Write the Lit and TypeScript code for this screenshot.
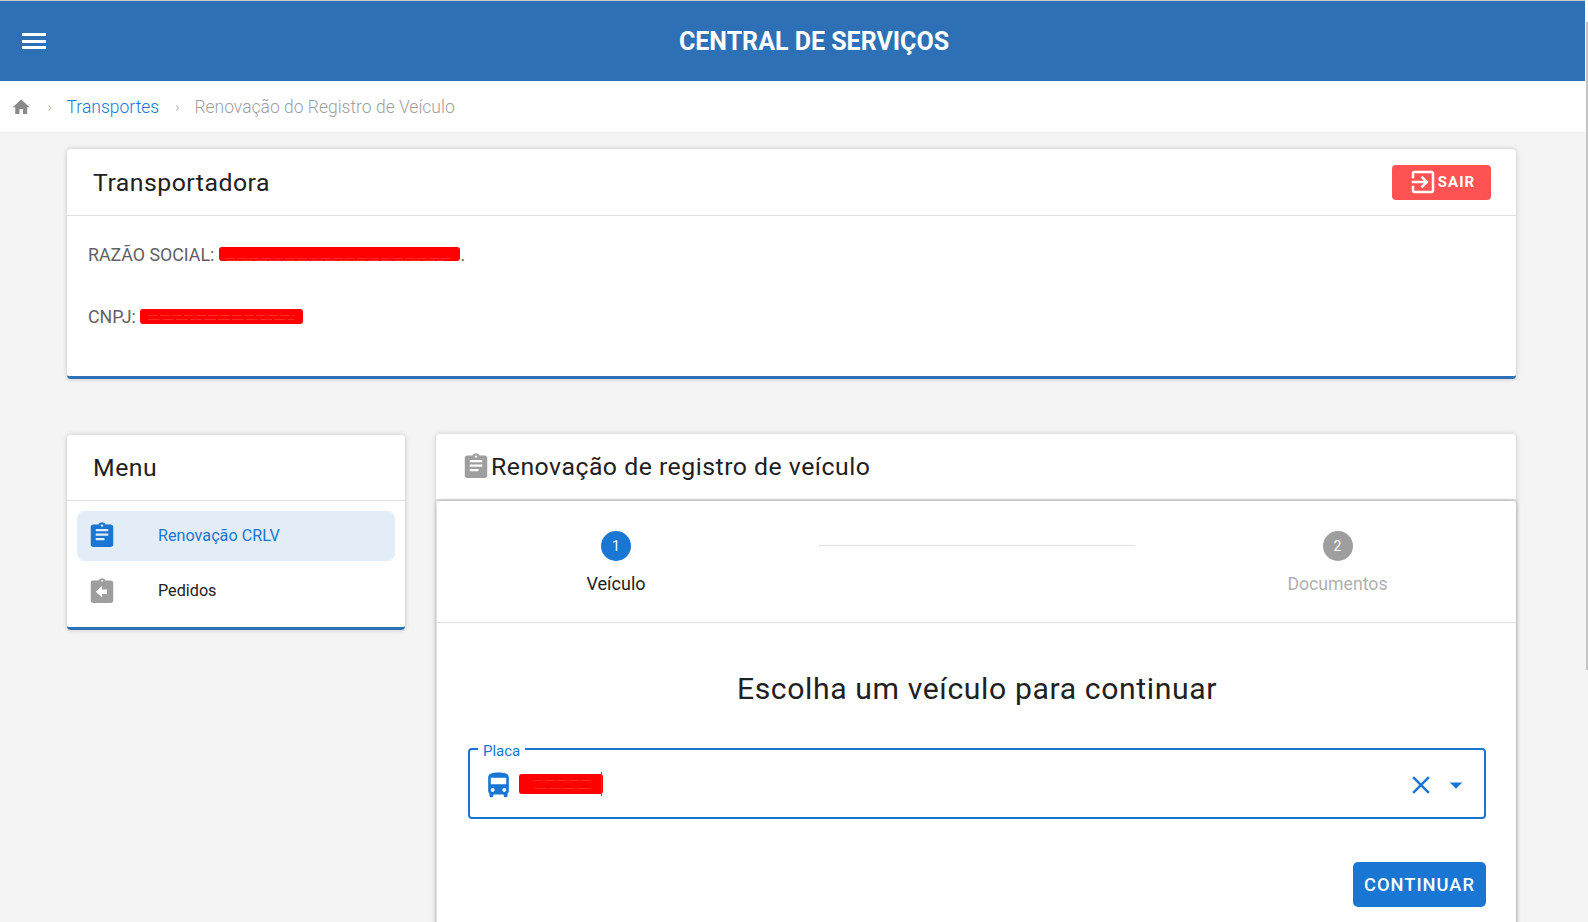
import { LitElement, html, css, svg } from "lit";
import { customElement } from "lit/decorators.js";

const clip = svg`<path d="M19 3h-4.18C14.4 1.84 13.3 1 12 1s-2.4.84-2.82 2H5c-1.1 0-2 .9-2 2v16c0 1.1.9 2 2 2h14c1.1 0 2-.9 2-2V5c0-1.1-.9-2-2-2zm-7 0c.55 0 1 .45 1 1s-.45 1-1 1-1-.45-1-1 .45-1 1-1zm2 14H7v-2h7v2zm3-4H7v-2h10v2zm0-4H7V7h10v2z"/>`;
const clipBack = svg`<path d="M19 3h-4.18C14.4 1.84 13.3 1 12 1s-2.4.84-2.82 2H5c-.14 0-.27.01-.4.04-.39.08-.74.28-1.01.55-.18.18-.33.4-.43.64-.1.23-.16.49-.16.77v16c0 .27.06.54.16.78.1.24.25.45.43.64.27.27.62.47 1.01.55.13.02.26.03.4.03h14c1.1 0 2-.9 2-2V5c0-1.1-.9-2-2-2zm-7-.25c.41 0 .75.34.75.75s-.34.75-.75.75-.75-.34-.75-.75.34-.75.75-.75zM16 15h-4v3l-5-5 5-5v3h4v4z"/>`;

@customElement("app-root")
export class AppRoot extends LitElement {
  static styles = css`
    :host { display: block; width: 1588px; height: 922px; overflow: hidden; background: #f4f4f4; font-family: Roboto, "Liberation Sans", sans-serif; color: #212121; position: relative; }
    * { box-sizing: border-box; }
    svg { display: block; fill: currentColor; flex: none; }
    .page { width: 1585px; display: flex; flex-direction: column; border-top: 1px solid #c8c8c8; }
    .scrollbar { position: absolute; right: 0; top: 0; width: 3px; height: 132px; background: #fff; }
    .thumb { position: absolute; right: 0; top: 22px; width: 2px; height: 648px; background: #c4c4c4; }
    .appbar { height: 80px; background: #2d70b6; color: #fff; display: flex; align-items: center; justify-content: center; position: relative; padding-left: 43px; }
    .appbar h1 { margin: 0; padding-top: 1px; font-size: 25px; font-weight: 700; line-height: 1; }
    .menu-btn { position: absolute; left: 22px; top: 32px; width: 24px; height: 16px; display: flex; flex-direction: column; justify-content: space-between; }
    .menu-btn i { display: block; height: 3px; background: #fff; }
    .crumbs { height: 52px; background: #fff; border-bottom: 1px solid #eeeeee; display: flex; align-items: center; padding: 1px 0 0 11px; font-size: 17.5px; font-weight: 300; color: #9e9e9e; }
    .crumbs .home { color: #8a8a8a; width: 20.4px; height: 20.4px; }
    .crumbs .sep { font-size: 14px; margin: 0 15px 0 16px; color: #9e9e9e; }
    .crumbs a { color: #1976d2; }
    .content { padding: 16px 69px 0 67px; display: flex; flex-direction: column; }
    .card { background: #fff; border-radius: 4px; box-shadow: 0 0 5px rgba(0,0,0,.2); }
    .blue-end { border-bottom: 3px solid #2d70b6; }
    .card-head { height: 66px; display: flex; align-items: center; justify-content: space-between; padding: 0 25px 0 26px; border-bottom: 1px solid #e0e0e0; }
    .card-head.top { height: 67px; }
    .card-head h2 { margin: 0; font-size: 24.8px; font-weight: 400; letter-spacing: .5px; }
    .sair { width: 99px; height: 35px; border-radius: 4px; background: #ff5252; color: #fff; font-size: 15px; font-weight: 700; letter-spacing: 1px; display: flex; align-items: center; justify-content: center; }
    .sair svg { width: 30px; height: 30px; }
    .info { height: 160px; padding: 27px 21px 0; font-size: 17.8px; color: #616161; display: flex; flex-direction: column; gap: 40px; }
    .info div { display: flex; align-items: center; height: 22px; gap: 4.6px; }
    .red { background-color: #ff0000; border-radius: 3px; display: block; background-repeat: no-repeat; background-image: repeating-linear-gradient(90deg, rgba(255,130,130,.3) 0 10px, transparent 10px 12px), repeating-linear-gradient(90deg, rgba(255,130,130,.3) 0 12px, transparent 12px 14px); }
    .dot { margin-left: -4px; }
    .r1 { width: 241px; height: 14px; background-size: 94% 1px, 90% 1px; background-position: 6px 11px, 8px 13px; }
    .r2 { width: 163px; height: 15px; background-size: 90% 1px, 90% 1px; background-position: 8px 6px, 8px 10px; }
    .cols { display: grid; grid-template-columns: 338px 1080px; gap: 31px; margin-top: 56px; align-items: start; }
    .menu-list { padding: 10px 10px 0; height: 126px; }
    .mi { height: 50px; border-radius: 8px; display: flex; align-items: center; padding-left: 10px; font-size: 16.2px; }
    .mi svg { width: 30px; height: 27px; margin-right: 41px; color: #9e9e9e; }
    .mi.on { background: #e3edf8; color: #1976d2; padding-bottom: 2px; }
    .mi.on svg { color: #1976d2; margin-top: -1px; }
    .mi + .mi { margin-top: 4px; }
    .main { margin-top: -1px; height: 600px; display: flex; flex-direction: column; }
    .main-head { height: 67px; flex: none; display: flex; align-items: center; padding-left: 25px; letter-spacing: .5px; border-bottom: 2px solid #e0e0e0; }
    .main-head svg { width: 30px; height: 27px; color: #9e9e9e; margin-top: -2px; }
    .main-head h2 { margin: 0; font-size: 24.8px; font-weight: 400; }
    .inner { flex: 1; margin-left: 1px; border-radius: 4px; background: #fff; box-shadow: 0 0 4px rgba(0,0,0,.28); }
    .stepper { height: 122px; border-bottom: 1px solid #e0e0e0; display: grid; grid-template-columns: 352px 1fr 357px; padding-top: 30px; }
    .step { display: flex; flex-direction: column; align-items: center; font-size: 18px; width: 100%; }
    .step b { width: 30px; height: 30px; border-radius: 50%; background: #1976d2; color: #fff; font-size: 14px; font-weight: 400; display: flex; align-items: center; justify-content: center; margin-bottom: 13px; }
    .step span { line-height: 20px; }
    .step.off { font-size: 17.7px; }
    .step.off b { background: #9e9e9e; }
    .step.off span { color: #b0b0b0; }
    .step.first { width: 358px; }
    .line { height: 1px; background: #e0e0e0; margin-top: 14px; width: 316px; margin-left: 30px; }
    .body { padding: 48px 30px 0 31px; display: flex; flex-direction: column; }
    .body h3 { margin: 0; text-align: center; font-size: 30.2px; font-weight: 400; letter-spacing: .6px; line-height: 36px; }
    .field { margin-top: 41px; height: 71px; border: 2px solid #1976d2; border-radius: 4px; display: flex; align-items: center; padding: 0 13px 0 13px; color: #1976d2; position: relative; }
    .field label { position: absolute; left: 8px; top: -8px; font-size: 15px; line-height: 18px; padding: 0 5px; background: #fff; }
    .field .bus { width: 31px; height: 31px; margin-top: 3px; }
    .r4 { width: 84px; height: 20px; margin-left: 5px; background-size: 72% 1px, 68% 1px; background-position: 14px 6px, 16px 14px; }
    .caret { width: 1px; height: 24px; background: #1976d2; margin-left: -2px; }
    .spacer { flex: 1; }
    .x { width: 30px; height: 30px; margin: 3px 5px 0 0; }
    .drop { width: 30px; height: 30px; margin-top: 3px; }
    .actions { display: flex; justify-content: flex-end; margin-top: 43px; }
    .go { width: 133px; height: 45px; border-radius: 5px; background: #1976d2; color: #fff; font-size: 18.3px; font-weight: 500; letter-spacing: 1px; display: flex; align-items: center; justify-content: center; }
  `;

  render() {
    return html`
      <div class="page">
        <header class="appbar">
          <div class="menu-btn"><i></i><i></i><i></i></div>
          <h1>CENTRAL DE SERVIÇOS</h1>
        </header>
        <nav class="crumbs">
          <svg class="home" viewBox="0 0 24 24"><path d="M10 20v-6h4v6h5v-8h3L12 3 2 12h3v8z"/></svg>
          <span class="sep">›</span><a>Transportes</a><span class="sep">›</span><span>Renovação do Registro de Veículo</span>
        </nav>
        <div class="content">
          <section class="card blue-end">
            <div class="card-head top">
              <h2>Transportadora</h2>
              <div class="sair">
                <svg viewBox="0 0 24 24"><path d="M10.09 15.59 11.5 17l5-5-5-5-1.41 1.41L12.67 11H3v2h9.67l-2.58 2.59zM19 3H5c-1.11 0-2 .9-2 2v4h2V5h14v14H5v-4H3v4c0 1.1.89 2 2 2h14c1.1 0 2-.9 2-2V5c0-1.1-.9-2-2-2z"/></svg>
                <span>SAIR</span>
              </div>
            </div>
            <div class="info">
              <div>RAZÃO SOCIAL:<span class="red r1"></span><span class="dot">.</span></div>
              <div>CNPJ:<span class="red r2"></span></div>
            </div>
          </section>
          <div class="cols">
            <aside class="card blue-end">
              <div class="card-head"><h2>Menu</h2></div>
              <div class="menu-list">
                <div class="mi on"><svg viewBox="0 0 24 24" preserveAspectRatio="none">${clip}</svg>Renovação CRLV</div>
                <div class="mi"><svg viewBox="0 0 24 24" preserveAspectRatio="none">${clipBack}</svg>Pedidos</div>
              </div>
            </aside>
            <section class="card main">
              <div class="main-head"><svg viewBox="0 0 24 24" preserveAspectRatio="none">${clip}</svg><h2>Renovação de registro de veículo</h2></div>
              <div class="inner">
                <div class="stepper">
                  <div class="step first"><b>1</b><span>Veículo</span></div>
                  <div class="line"></div>
                  <div class="step off"><b>2</b><span>Documentos</span></div>
                </div>
                <div class="body">
                  <h3>Escolha um veículo para continuar</h3>
                  <div class="field">
                    <label>Placa</label>
                    <svg class="bus" viewBox="0 0 24 24"><path d="M4 16c0 .88.39 1.67 1 2.22V20c0 .55.45 1 1 1h1c.55 0 1-.45 1-1v-1h8v1c0 .55.45 1 1 1h1c.55 0 1-.45 1-1v-1.78c.61-.55 1-1.34 1-2.22V6c0-3.5-3.58-4-8-4s-8 .5-8 4v10zm3.5 1c-.83 0-1.5-.67-1.5-1.5S6.67 14 7.5 14s1.5.67 1.5 1.5S8.33 17 7.5 17zm9 0c-.83 0-1.5-.67-1.5-1.5s.67-1.5 1.5-1.5 1.5.67 1.5 1.5-.67 1.5-1.5 1.5zm1.5-6H6V6h12v5z"/></svg>
                    <span class="red r4"></span><span class="caret"></span>
                    <span class="spacer"></span>
                    <svg class="x" viewBox="0 0 24 24"><path d="M19 6.41 17.59 5 12 10.59 6.41 5 5 6.41 10.59 12 5 17.59 6.41 19 12 13.41 17.59 19 19 17.59 13.41 12z"/></svg>
                    <svg class="drop" viewBox="0 0 24 24"><path d="M7 10l5 5 5-5z"/></svg>
                  </div>
                  <div class="actions"><div class="go">CONTINUAR</div></div>
                </div>
              </div>
            </section>
          </div>
        </div>
      </div>
      <div class="scrollbar"></div>
      <div class="thumb"></div>
    `;
  }
}
